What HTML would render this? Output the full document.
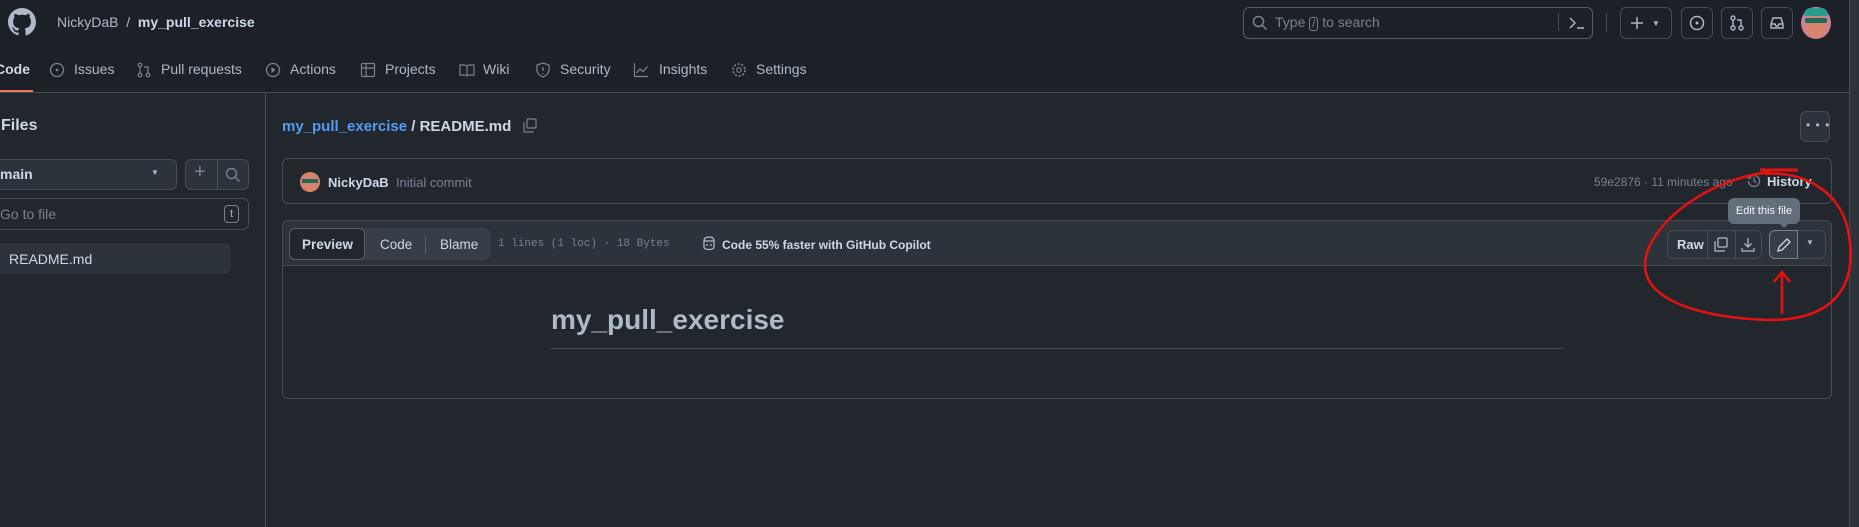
<!DOCTYPE html>
<html><head><style>
*{box-sizing:border-box;margin:0;padding:0}
body{width:1859px;height:527px;overflow:hidden;background:#22272e;font-family:"Liberation Sans",sans-serif;color:#adbac7;position:relative;font-size:14px}
.a{position:absolute}
.hdr{left:0;top:0;width:1859px;height:93px;background:#1c2128;border-bottom:1px solid #444c56}
.btn{position:absolute;border:1px solid #444c56;border-radius:6px;background:#2d333b}
.ib{position:absolute;border:1px solid #444c56;border-radius:6px}
.tab{position:absolute;top:61px;font-size:14px;color:#adbac7}
svg{position:absolute}
</style></head><body>
<div class="a hdr"></div>
<svg style="left:8px;top:8px" width="28" height="28" viewBox="0 0 16 16"><path fill="#adbac7" d="M8 0C3.58 0 0 3.58 0 8c0 3.540 2.29 6.53 5.47 7.59.4.07.55-.17.55-.38v-1.33c-2.23.48-2.7-1.07-2.7-1.07-.36-.92-.89-1.170-.89-1.17-.73-.5.06-.49.06-.49.8.06 1.23.82 1.23.82.71 1.22 1.870.87 2.33.66.07-.52.28-.87.5-1.07-1.78-.2-3.64-.89-3.64-3.95 0-.87.31-1.59.82-2.15-.08-.2-.36-1.02.08-2.12 0 0 .67-.21 2.2.82a7.6 7.6 0 0 1 4 0c1.53-1.04 2.2-.82 2.2-.82.44 1.1.16 1.92.08 2.12.51.56.82 1.27.82 2.15 0 3.07-1.87 3.75-3.65 3.95.29.25.54.73.54 1.48v2.2c0 .21.15.46.55.38A8 8 0 0 0 16 8c0-4.42-3.58-8-8-8z"/></svg>
<div class="a" style="left:57px;top:14px;font-size:14px;color:#adbac7">NickyDaB &nbsp;/&nbsp; <b style="color:#cdd9e5">my_pull_exercise</b></div>
<div class="ib" style="left:1243px;top:7px;width:350px;height:32px;border-color:#545d68"></div>
<svg style="left:1252px;top:15px" width="16" height="16"><circle cx="6.5" cy="6.5" r="5" fill="none" stroke="#768390" stroke-width="1.5"/><path d="M10 10l4.5 4.5" stroke="#768390" stroke-width="1.5"/></svg>
<div class="a" style="left:1275px;top:14px;font-size:14px;color:#768390">Type <span style="border:1px solid #768390;border-radius:3px;padding:0 2px;font-size:11px">/</span> to search</div>
<div class="a" style="left:1558px;top:13px;width:1px;height:18px;background:#444c56"></div>
<svg style="left:1568px;top:15px" width="18" height="16"><path d="M2 3l5 5-5 5M9 13h7" fill="none" stroke="#adbac7" stroke-width="1.4"/></svg>
<div class="a" style="left:1606px;top:13px;width:1px;height:20px;background:#444c56"></div>
<div class="ib" style="left:1620px;top:7px;width:52px;height:32px"></div>
<svg style="left:1629px;top:15px" width="16" height="16"><path d="M8 2v12M2 8h12" stroke="#adbac7" stroke-width="1.5"/></svg>
<div class="a" style="left:1652px;top:19px;font-size:8px;color:#adbac7">▼</div>
<div class="ib" style="left:1681px;top:7px;width:32px;height:32px"></div>
<svg style="left:1689px;top:15px" width="16" height="16"><circle cx="8" cy="8" r="6.5" fill="none" stroke="#adbac7" stroke-width="1.5"/><circle cx="8" cy="8" r="1.5" fill="#adbac7"/></svg>
<div class="ib" style="left:1721px;top:7px;width:32px;height:32px"></div>
<svg style="left:1729px;top:15px" width="16" height="16"><circle cx="4" cy="3" r="2" fill="none" stroke="#adbac7" stroke-width="1.4"/><circle cx="4" cy="13" r="2" fill="none" stroke="#adbac7" stroke-width="1.4"/><circle cx="12" cy="13" r="2" fill="none" stroke="#adbac7" stroke-width="1.4"/><path d="M4 5v6M12 11V5H8" fill="none" stroke="#adbac7" stroke-width="1.4"/></svg>
<div class="ib" style="left:1761px;top:7px;width:32px;height:32px"></div>
<svg style="left:1769px;top:15px" width="16" height="16"><path d="M2 9l2-6h8l2 6v4H2zM2 9h4l1 2h2l1-2h4" fill="none" stroke="#adbac7" stroke-width="1.4"/></svg>
<div class="a" style="left:1801px;top:7px;width:30px;height:32px;border-radius:50%;background:radial-gradient(circle at 50% 60%,#d9836f 0 40%,#c77fb0 60%);"></div>
<div class="a" style="left:1805px;top:18px;width:22px;height:5px;background:#1b6b5a;border-radius:2px"></div>
<div class="a" style="left:1804px;top:8px;width:24px;height:8px;background:#2a9d8f;border-radius:10px 10px 2px 2px"></div>
<div class="tab" style="left:-5px;color:#cdd9e5;font-weight:bold">Code</div>
<div class="a" style="left:0;top:90px;width:33px;height:2px;background:#ec775c"></div>
<svg style="left:49px;top:62px" width="16" height="16"><circle cx="8" cy="8" r="6.5" fill="none" stroke="#768390" stroke-width="1.3"/><circle cx="8" cy="8" r="1.3" fill="#768390"/></svg>
<div class="tab" style="left:74px">Issues</div>
<svg style="left:136px;top:62px" width="16" height="16"><circle cx="4" cy="3" r="1.8" fill="none" stroke="#768390" stroke-width="1.2"/><circle cx="4" cy="13" r="1.8" fill="none" stroke="#768390" stroke-width="1.2"/><circle cx="12" cy="13" r="1.8" fill="none" stroke="#768390" stroke-width="1.2"/><path d="M4 5v6M12 11V5H8" fill="none" stroke="#768390" stroke-width="1.2"/></svg>
<div class="tab" style="left:161px">Pull requests</div>
<svg style="left:265px;top:62px" width="16" height="16"><circle cx="8" cy="8" r="6.5" fill="none" stroke="#768390" stroke-width="1.3"/><path d="M6.5 5v6l4-3z" fill="#768390"/></svg>
<div class="tab" style="left:290px">Actions</div>
<svg style="left:360px;top:62px" width="16" height="16"><rect x="1.5" y="1.5" width="13" height="13" rx="1" fill="none" stroke="#768390" stroke-width="1.2"/><path d="M6 1.5v13M1.5 6H14.5" stroke="#768390" stroke-width="1.2"/></svg>
<div class="tab" style="left:385px">Projects</div>
<svg style="left:459px;top:62px" width="16" height="16"><path d="M1 3h5l2 1 2-1h5v10h-5l-2 1-2-1H1zM8 4v10" fill="none" stroke="#768390" stroke-width="1.2"/></svg>
<div class="tab" style="left:483px">Wiki</div>
<svg style="left:535px;top:62px" width="16" height="16"><path d="M8 1l6 2v5c0 3-3 6-6 7-3-1-6-4-6-7V3z" fill="none" stroke="#768390" stroke-width="1.2"/><path d="M8 5v4M8 11v1" stroke="#768390" stroke-width="1.3"/></svg>
<div class="tab" style="left:560px">Security</div>
<svg style="left:633px;top:62px" width="16" height="16"><path d="M1.5 1v13.5H15M3.5 11l3.5-4 3 2.5 4.5-5" fill="none" stroke="#768390" stroke-width="1.2"/></svg>
<div class="tab" style="left:659px">Insights</div>
<svg style="left:731px;top:62px" width="16" height="16"><circle cx="8" cy="8" r="2.3" fill="none" stroke="#768390" stroke-width="1.2"/><circle cx="8" cy="8" r="6" fill="none" stroke="#768390" stroke-width="1.6" stroke-dasharray="2.2 1.6"/></svg>
<div class="tab" style="left:756px">Settings</div>
<div class="a" style="left:265px;top:93px;width:1px;height:434px;background:#444c56"></div>
<div class="a" style="left:1849px;top:0;width:10px;height:527px;background:#2d333b;border-left:1px solid #444c56"></div>
<div class="a" style="left:1px;top:117px;font-size:16px;font-weight:bold;color:#cdd9e5">Files</div>
<div class="btn" style="left:-8px;top:159px;width:185px;height:31px"></div>
<div class="a" style="left:0;top:166px;font-weight:bold;color:#cdd9e5">main</div>
<div class="a" style="left:151px;top:168px;font-size:8px;color:#adbac7">▼</div>
<div class="btn" style="left:185px;top:159px;width:64px;height:31px"></div>
<div class="a" style="left:217px;top:159px;width:1px;height:31px;background:#444c56"></div>
<div class="a" style="left:194px;top:161px;font-size:20px;color:#768390">+</div>
<svg style="left:225px;top:167px" width="16" height="16"><circle cx="6.5" cy="6.5" r="5" fill="none" stroke="#768390" stroke-width="1.4"/><path d="M10 10l4.5 4.5" stroke="#768390" stroke-width="1.4"/></svg>
<div class="ib" style="left:-8px;top:198px;width:257px;height:32px;background:#22272e"></div>
<div class="a" style="left:0;top:206px;color:#768390">Go to file</div>
<div class="a" style="left:224px;top:205px;width:15px;height:18px;border:1px solid #768390;border-radius:4px;font-size:11px;text-align:center;line-height:16px;color:#adbac7">t</div>
<div class="a" style="left:-6px;top:243px;width:237px;height:31px;border-radius:6px;background:#2d333b"></div>
<div class="a" style="left:9px;top:251px;color:#cdd9e5">README.md</div>
<div class="a" style="left:282px;top:118px;font-size:15px;font-weight:bold;color:#cdd9e5"><span style="color:#539bf5">my_pull_exercise</span> / README.md</div>
<svg style="left:522px;top:118px" width="16" height="16"><rect x="5" y="1" width="9" height="9" rx="1" fill="none" stroke="#768390" stroke-width="1.2"/><path d="M3 5H2v9h9v-1" fill="none" stroke="#768390" stroke-width="1.2"/></svg>
<div class="btn" style="left:1800px;top:111px;width:30px;height:31px"></div>
<div class="a" style="left:1806px;top:118px;color:#adbac7;letter-spacing:1px;font-size:12px">• • •</div>
<div class="ib" style="left:282px;top:158px;width:1550px;height:46px"></div>
<div class="a" style="left:300px;top:172px;width:20px;height:20px;border-radius:50%;background:#d9836f"></div>
<div class="a" style="left:302px;top:179px;width:16px;height:4px;background:#1b6b5a"></div>
<div class="a" style="left:328px;top:175px;font-size:13px"><b style="color:#cdd9e5">NickyDaB</b> <span style="color:#768390">&nbsp;Initial commit</span></div>
<div class="a" style="left:1594px;top:175px;font-size:12px;color:#768390">59e2876 · 11 minutes ago</div>
<svg style="left:1746px;top:173px" width="16" height="16"><path d="M2.5 8a5.5 5.5 0 1 0 1.6-3.9M2 2v3h3M8 4.5V8l2.5 1.5" fill="none" stroke="#768390" stroke-width="1.3"/></svg>
<div class="a" style="left:1767px;top:174px;font-size:13px;font-weight:bold;color:#cdd9e5">History</div>
<div class="ib" style="left:282px;top:220px;width:1550px;height:179px"></div>
<div class="a" style="left:283px;top:221px;width:1548px;height:45px;background:#2d333b;border-bottom:1px solid #444c56;border-radius:6px 6px 0 0"></div>
<div class="a" style="left:289px;top:228px;width:201px;height:32px;border-radius:6px;background:#373e47"></div>
<div class="a" style="left:289px;top:228px;width:76px;height:32px;border-radius:6px;background:#22272e;border:1px solid #545d68"></div>
<div class="a" style="left:302px;top:237px;font-size:13.5px;font-weight:bold;color:#cdd9e5">Preview</div>
<div class="a" style="left:380px;top:237px;font-size:13.5px;color:#cdd9e5">Code</div>
<div class="a" style="left:425px;top:236px;width:1px;height:18px;background:#545d68"></div>
<div class="a" style="left:440px;top:237px;font-size:13.5px;color:#cdd9e5">Blame</div>
<div class="a" style="left:498px;top:238px;font-family:'Liberation Mono',monospace;font-size:11px;color:#768390">1 lines (1 loc) · 18 Bytes</div>
<svg style="left:701px;top:235px" width="16" height="16"><path d="M3 6c0-3 2-4 5-4s5 1 5 4v6c0 1.5-2 2.5-5 2.5S3 13.5 3 12z M3 6h10" fill="none" stroke="#adbac7" stroke-width="1.3"/><path d="M6 9v2M10 9v2" stroke="#adbac7" stroke-width="1.3"/></svg>
<div class="a" style="left:722px;top:238px;font-size:12px;font-weight:bold;color:#cdd9e5">Code 55% faster with GitHub Copilot</div>
<div class="btn" style="left:1667px;top:230px;width:95px;height:29px"></div>
<div class="a" style="left:1707px;top:230px;width:1px;height:29px;background:#444c56"></div>
<div class="a" style="left:1735px;top:230px;width:1px;height:29px;background:#444c56"></div>
<div class="a" style="left:1677px;top:237px;font-size:13px;font-weight:bold;color:#cdd9e5">Raw</div>
<svg style="left:1713px;top:237px" width="16" height="16"><rect x="5" y="1" width="9" height="9" rx="1" fill="none" stroke="#adbac7" stroke-width="1.3"/><path d="M3 5H2v9h9v-1" fill="none" stroke="#adbac7" stroke-width="1.3"/></svg>
<svg style="left:1740px;top:237px" width="16" height="16"><path d="M8 1v9M4.5 6.5L8 10l3.5-3.5M2 11v3h12v-3" fill="none" stroke="#adbac7" stroke-width="1.3"/></svg>
<div class="btn" style="left:1769px;top:230px;width:57px;height:29px"></div>
<div class="a" style="left:1769px;top:230px;width:29px;height:29px;border:1px solid #768390;border-radius:6px 0 0 6px;background:#373e47"></div>
<svg style="left:1776px;top:237px" width="16" height="16"><path d="M11 2l3 3-8 8-4 1 1-4z" fill="none" stroke="#cdd9e5" stroke-width="1.3"/></svg>
<div class="a" style="left:1806px;top:238px;font-size:8px;color:#adbac7">▼</div>
<div class="a" style="left:1728px;top:198px;width:72px;height:26px;border-radius:6px;background:#636e7b;color:#f0f6fc;font-size:11px;text-align:center;line-height:26px">Edit this file</div>
<div class="a" style="left:1779px;top:223px;width:0;height:0;border-left:5px solid transparent;border-right:5px solid transparent;border-top:5px solid #636e7b"></div>
<div class="a" style="left:551px;top:304px;font-size:28px;font-weight:bold;color:#adbac7">my_pull_exercise</div>
<div class="a" style="left:551px;top:348px;width:1012px;height:1px;background:#444c56"></div>
<svg style="left:0;top:0" width="1859" height="527"><path d="M1770 172 C1700 180 1645 230 1645 265 C1645 300 1700 318 1770 320 C1830 320 1860 290 1848 230 C1840 190 1800 170 1765 174" fill="none" stroke="#e81010" stroke-width="2.5"/><path d="M1760 170h38" stroke="#e81010" stroke-width="3"/><path d="M1782 314V272M1774 282l8-10 8 10" fill="none" stroke="#e81010" stroke-width="2.5"/></svg>
</body></html>
